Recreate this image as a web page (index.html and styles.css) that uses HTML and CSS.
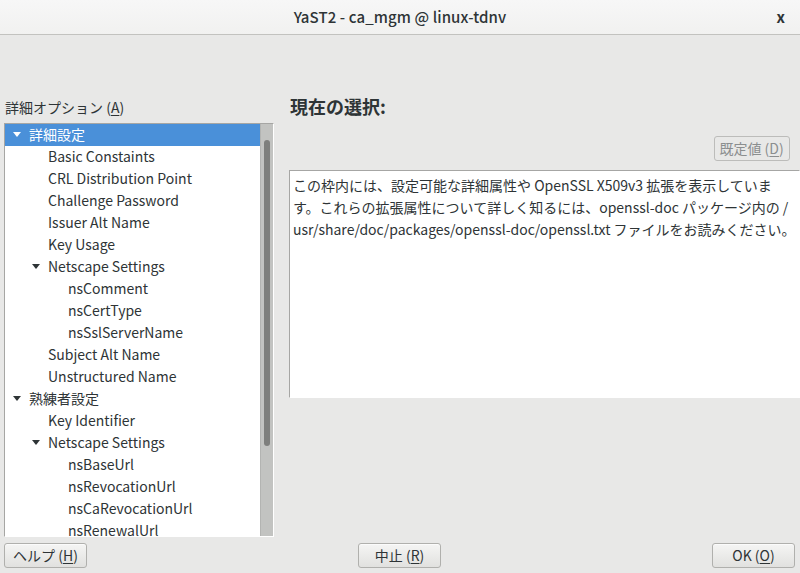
FILE: index.html
```html
<!DOCTYPE html>
<html lang="ja">
<head>
<meta charset="utf-8">
<title>YaST2 - ca_mgm @ linux-tdnv</title>
<link rel="stylesheet" href="styles.css">
</head>
<body>
<div class="window">
  <header class="titlebar">
    <span class="title">YaST2 - ca_mgm @ linux-tdnv</span>
    <span class="close">x</span>
  </header>
  <main class="main">
    <section class="left">
      <div class="label">詳細オプション (<u>A</u>)</div>
      <div class="tree">
        <ul class="rows">
          <li class="row l0 selected"><span class="tog open"></span>詳細設定</li>
          <li class="row l1"><span class="tog"></span>Basic Constaints</li>
          <li class="row l1"><span class="tog"></span>CRL Distribution Point</li>
          <li class="row l1"><span class="tog"></span>Challenge Password</li>
          <li class="row l1"><span class="tog"></span>Issuer Alt Name</li>
          <li class="row l1"><span class="tog"></span>Key Usage</li>
          <li class="row l1"><span class="tog open"></span>Netscape Settings</li>
          <li class="row l2"><span class="tog"></span>nsComment</li>
          <li class="row l2"><span class="tog"></span>nsCertType</li>
          <li class="row l2"><span class="tog"></span>nsSslServerName</li>
          <li class="row l1"><span class="tog"></span>Subject Alt Name</li>
          <li class="row l1"><span class="tog"></span>Unstructured Name</li>
          <li class="row l0"><span class="tog open"></span>熟練者設定</li>
          <li class="row l1"><span class="tog"></span>Key Identifier</li>
          <li class="row l1"><span class="tog open"></span>Netscape Settings</li>
          <li class="row l2"><span class="tog"></span>nsBaseUrl</li>
          <li class="row l2"><span class="tog"></span>nsRevocationUrl</li>
          <li class="row l2"><span class="tog"></span>nsCaRevocationUrl</li>
          <li class="row l2"><span class="tog"></span>nsRenewalUrl</li>
        </ul>
        <div class="scrollbar"><div class="thumb"></div></div>
      </div>
    </section>
    <section class="right">
      <h1 class="heading">現在の選択:</h1>
      <div class="btnrow"><button class="btn disabled">既定値 (<u>D</u>)</button></div>
      <div class="textbox">この枠内には、設定可能な詳細属性や OpenSSL X509v3 拡張を表示していま<br>す。これらの拡張属性について詳しく知るには、openssl-doc パッケージ内の /<br>usr/share/doc/packages/openssl-doc/openssl.txt ファイルをお読みください。</div>
    </section>
  </main>
  <footer class="footer">
    <button class="btn">ヘルプ (<u>H</u>)</button>
    <button class="btn">中止 (<u>R</u>)</button>
    <button class="btn">OK (<u>O</u>)</button>
  </footer>
</div>
</body>
</html>
```

FILE: styles.css
```css
* { box-sizing: border-box; }
html, body { margin: 0; padding: 0; }
body {
  width: 800px;
  height: 573px;
  overflow: hidden;
  background: #e8e8e7;
  font-family: "Noto Sans CJK JP", "Noto Sans", sans-serif;
  font-size: 14px;
  color: #2e3436;
}
u { text-decoration: underline; text-underline-offset: 2px; }
.window {
  display: flex;
  flex-direction: column;
  height: 573px;
}
.titlebar {
  height: 35px;
  flex: 0 0 35px;
  display: flex;
  align-items: center;
  justify-content: center;
  padding-bottom: 2px;
  background: linear-gradient(#f7f7f7, #f1f1f0);
  border-bottom: 1px solid #c2c2bf;
  position: relative;
}
.title {
  font-size: 15px;
  font-weight: 500;
  color: #2e3436;
  letter-spacing: 0.1px;
}
.close {
  position: absolute;
  right: 15px;
  top: 6px;
  font-size: 15px;
  font-weight: 700;
  color: #2e3436;
}
.main {
  flex: 1;
  display: grid;
  grid-template-columns: 270px 1fr;
  column-gap: 15px;
  padding: 0 4px 0 4px;
  min-height: 0;
}
.left {
  display: flex;
  flex-direction: column;
  padding-top: 62px;
  min-height: 0;
}
.label {
  line-height: 20px;
  height: 20px;
  padding-left: 1px;
  margin-bottom: 6px;
}
.tree {
  flex: 1;
  display: flex;
  min-height: 0;
  background: #fff;
  border-top: 1px solid #a6a6a4;
  border-left: 1px solid #a6a6a4;
  border-right: 1px solid #fff;
  border-bottom: 1px solid #fff;
  overflow: hidden;
}
.rows {
  flex: 1;
  list-style: none;
  margin: 0;
  padding: 0;
  overflow: hidden;
}
.row {
  height: 22px;
  line-height: 20px;
  padding-bottom: 2px;
  display: flex;
  align-items: center;
  white-space: nowrap;
  color: #2e3436;
}
.row.selected {
  background: #4a90d9;
  color: #fff;
}
.l0 { padding-left: 8px; }
.l1 { padding-left: 27px; }
.l2 { padding-left: 47px; }
.tog {
  width: 16px;
  flex: 0 0 16px;
  height: 20px;
  position: relative;
}
.tog.open::before {
  content: "";
  position: absolute;
  left: 0;
  top: 8px;
  width: 0;
  height: 0;
  border-left: 4px solid transparent;
  border-right: 4px solid transparent;
  border-top: 5px solid #2e3436;
}
.selected .tog.open::before { border-top-color: #ffffff; }
.scrollbar {
  flex: 0 0 13px;
  width: 13px;
  background: #c2c3c1;
  border-left: 1px solid #b3b4b2;
  padding: 16px 3px 0 3px;
}
.thumb {
  width: 6px;
  height: 306px;
  border-radius: 3px;
  background: #7e7f7d;
}
.right {
  display: flex;
  flex-direction: column;
  padding-top: 60px;
}
.heading {
  margin: 0;
  font-size: 18px;
  font-weight: 700;
  line-height: 22px;
  height: 22px;
  padding-left: 1px;
  color: #2e3436;
}
.btnrow {
  display: flex;
  justify-content: flex-end;
  margin-top: 19px;
  padding-right: 10px;
}
.btn {
  font-family: inherit;
  font-size: 14px;
  color: #2e3436;
  height: 25px;
  width: 83px;
  padding: 0 0 2px 0;
  line-height: 20px;
  border: 1px solid #b0b0ad;
  border-radius: 3px;
  background: linear-gradient(#f5f5f4, #e1e1df);
  box-shadow: inset 0 1px 0 #fbfbfb;
}
.btn.disabled {
  width: 76px;
  color: #8b8e8f;
  background: #e8e8e7;
  border-color: #bcbcba;
  box-shadow: none;
}
.textbox {
  margin-top: 9px;
  height: 228px;
  background: #fff;
  border-top: 1px solid #a6a6a4;
  border-left: 1px solid #a6a6a4;
  border-right: 1px solid #fff;
  border-bottom: 1px solid #fff;
  padding: 3px 3px;
  line-height: 22px;
  white-space: nowrap;
  overflow: hidden;
  color: #2e3436;
}
.footer {
  flex: 0 0 36px;
  display: flex;
  justify-content: space-between;
  align-items: flex-start;
  padding: 6px 5px 5px 4px;
}
```
